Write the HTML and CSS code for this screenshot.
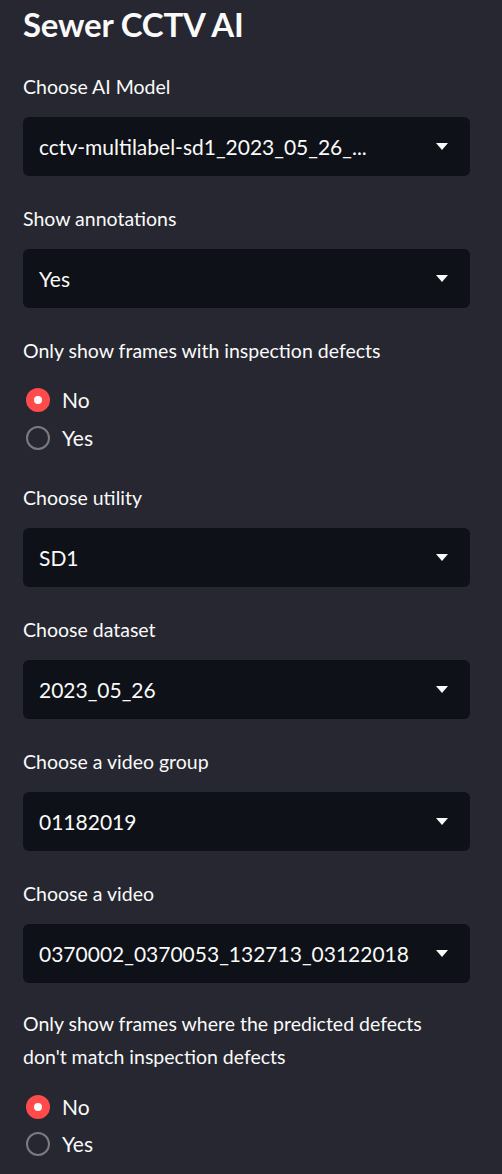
FILE: index.html
```html
<!DOCTYPE html>
<html lang="en">
<head>
    <meta charset="UTF-8">
    <meta name="viewport" content="width=device-width, initial-scale=1.0">
    <title>Sewer CCTV AI</title>
    <link rel="stylesheet" href="styles.css">
</head>
<body>
    <div class="sidebar">
        <h1>Sewer CCTV AI</h1>

        <div class="field">
            <label>Choose AI Model</label>
            <div class="select">
                <span class="value">cctv-multilabel-sd1_2023_05_26_...</span>
                <svg class="caret" width="12" height="7" viewBox="0 0 12 7"><path d="M0 0h12L6 7z" fill="#fafafa"/></svg>
            </div>
        </div>

        <div class="field">
            <label>Show annotations</label>
            <div class="select">
                <span class="value">Yes</span>
                <svg class="caret" width="12" height="7" viewBox="0 0 12 7"><path d="M0 0h12L6 7z" fill="#fafafa"/></svg>
            </div>
        </div>

        <div class="field">
            <label>Only show frames with inspection defects</label>
            <div class="radios">
                <div class="radio checked"><span class="dot"></span>No</div>
                <div class="radio"><span class="dot"></span>Yes</div>
            </div>
        </div>

        <div class="field">
            <label>Choose utility</label>
            <div class="select">
                <span class="value">SD1</span>
                <svg class="caret" width="12" height="7" viewBox="0 0 12 7"><path d="M0 0h12L6 7z" fill="#fafafa"/></svg>
            </div>
        </div>

        <div class="field">
            <label>Choose dataset</label>
            <div class="select">
                <span class="value">2023_05_26</span>
                <svg class="caret" width="12" height="7" viewBox="0 0 12 7"><path d="M0 0h12L6 7z" fill="#fafafa"/></svg>
            </div>
        </div>

        <div class="field">
            <label>Choose a video group</label>
            <div class="select">
                <span class="value">01182019</span>
                <svg class="caret" width="12" height="7" viewBox="0 0 12 7"><path d="M0 0h12L6 7z" fill="#fafafa"/></svg>
            </div>
        </div>

        <div class="field">
            <label>Choose a video</label>
            <div class="select">
                <span class="value">0370002_0370053_132713_03122018</span>
                <svg class="caret" width="12" height="7" viewBox="0 0 12 7"><path d="M0 0h12L6 7z" fill="#fafafa"/></svg>
            </div>
        </div>

        <div class="field two-line">
            <label>Only show frames where the predicted defects don't match inspection defects</label>
            <div class="radios">
                <div class="radio checked"><span class="dot"></span>No</div>
                <div class="radio"><span class="dot"></span>Yes</div>
            </div>
        </div>
    </div>
</body>
</html>
```

FILE: styles.css
```css
body {
    margin: 0;
    padding: 0;
    background-color: #262730;
    color: #fafafa;
    font-family: Lato, "Open Sans", sans-serif;
}
.sidebar {
    padding: 0 32px 0 23px;
}
h1 {
    margin: 0;
    padding-top: 4px;
    font-size: 33px;
    line-height: 40px;
    font-weight: 700;
    letter-spacing: -0.2px;
}
.field {
    margin-top: 26px;
}
label {
    display: block;
    font-size: 19.5px;
    line-height: 33px;
    margin-bottom: 14px;
}
.select {
    display: flex;
    align-items: center;
    height: 59px;
    padding: 0 22px 0 16px;
    background-color: #0e1117;
    border-radius: 6px;
}
.value {
    flex: 1;
    min-width: 0;
    font-size: 21px;
    white-space: nowrap;
    margin-right: 20px;
}
.caret {
    flex: none;
}
.radios {
    display: flex;
    flex-direction: column;
    gap: 6px;
    padding: 3px 0 1px;
}
.two-line {
    margin-top: 24px;
}
.two-line label {
    max-width: 420px;
}
.two-line .radios {
    padding-top: 4px;
    gap: 5px;
}
.radio {
    display: flex;
    align-items: center;
    gap: 12px;
    font-size: 21px;
    line-height: 32px;
    padding-left: 3px;
}
.dot {
    width: 24px;
    height: 24px;
    box-sizing: border-box;
    border-radius: 50%;
    border: 2.5px solid rgba(250, 250, 250, 0.4);
}
.radio.checked .dot {
    border: 8px solid #ff4b4b;
    background-color: #fafafa;
}
```
